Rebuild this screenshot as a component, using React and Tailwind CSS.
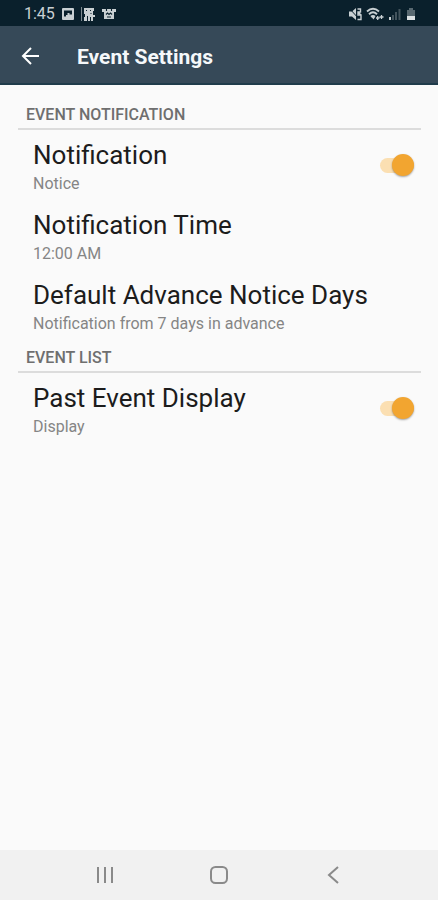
import { useState } from "react";

function StatusBar() {
  return (
    <div className="flex h-[26px] shrink-0 items-center justify-between bg-[#0a202c] pt-px pr-[22px] pl-6 text-[#c9d0d3]">
      <div className="flex items-center gap-[6px]">
        <span className="text-base leading-5">1:45</span>
        <svg className="h-3.5 w-3.5" viewBox="0 0 14 14" aria-hidden="true">
          <rect x="1" y="1" width="12" height="12" rx="1" fill="currentColor" />
          <path d="M3 3.500h8v4H8.500V6H6.500v2H5v1.500H3z" fill="#0a202c" />
        </svg>
        <svg className="h-4 w-3.5" viewBox="0 0 14 16" aria-hidden="true">
          <path d="M0.5 1v14" stroke="#7c898f" strokeWidth="1" />
          <path d="M3 2h10v3h-1v4h2v2h-2v4h-2v-4H9v4H7v-5H6v5H3v-4h1V8H3z" fill="currentColor" />
          <path d="M5 4.500h1M9 4.500h1M9.500 7.500h1" stroke="#0a202c" strokeWidth="1" />
        </svg>
        <svg className="h-3.5 w-4" viewBox="0 0 16 14" aria-hidden="true">
          <path d="M1 2h14v3h-2v7H3V5H1z" fill="currentColor" />
          <path d="M5.500 1v3M10.500 1v3M5 7.500l1.500-1.500L8 7.500 9.500 6 11 7.500M6 10h4" fill="none" stroke="#0a202c" strokeWidth="1.100" />
        </svg>
      </div>
      <div className="flex items-center gap-1">
        <svg className="h-3.5 w-3.5" viewBox="0 0 14 14" aria-hidden="true">
          <path d="M1 4.500h3l4-3.500v12L4 9.500H1z" fill="currentColor" />
          <path d="M1 1l11 12" stroke="#0a202c" strokeWidth="1" />
          <path d="M9.500 2h3v3h-2.500v3h3v4.500h-3.500M10 5l3 3" fill="none" stroke="currentColor" strokeWidth="1.400" />
        </svg>
        <svg className="h-3.5 w-[18px]" viewBox="0 0 18 14" aria-hidden="true">
          <path d="M1 4.500Q7-1 13 4.500M3 7.200Q7 3.500 11 7.200M5 9.800Q7 8 9 9.800" fill="none" stroke="currentColor" strokeWidth="1.900" />
          <path d="M5.500 10L7.500 12.500 9 10z" fill="currentColor" />
          <path d="M10 11h3.500M11.700 9v4M13.500 10h4M15.500 8v4" stroke="currentColor" strokeWidth="1.300" />
        </svg>
        <svg className="h-3.5 w-3.5" viewBox="0 0 14 14" aria-hidden="true">
          <path d="M1 10h2v3H1z" fill="currentColor" />
          <path d="M4 8h2v5H4zM7 5h2v8H7zM10.500 2h2v11h-2z" fill="#43545d" />
        </svg>
        <svg className="h-3.5 w-2.5" viewBox="0 0 10 14" aria-hidden="true">
          <path d="M3 1h4v2h2v6H1V3h2z" fill="#596971" />
          <path d="M1 9h8v4H1z" fill="#dde2e4" />
        </svg>
      </div>
    </div>
  );
}

function AppBar() {
  return (
    <header className="flex h-[59px] shrink-0 items-center border-b-2 border-[#203c4b] bg-[#364958] pt-1 pl-[19px]">
      <button type="button" aria-label="Back" className="text-white">
        <svg className="h-6 w-6" viewBox="0 0 24 24" fill="none" stroke="currentColor" strokeWidth="2" aria-hidden="true">
          <path d="M20 11H4.500M12 3l-8 8 8 8" />
        </svg>
      </button>
      <h1 className="ml-[34px] text-[21px] leading-7 font-bold text-[#f5f8fa]">Event Settings</h1>
    </header>
  );
}

function Section({ title, children }) {
  return (
    <section>
      <h2 className="mr-[17px] ml-[18px] flex h-[33px] items-center border-b-2 border-[#dcdcdc] pt-[5px] pl-2 text-base leading-5 font-medium text-[#6f6f6f]">
        {title}
      </h2>
      {children}
    </section>
  );
}

function RowText({ title, summary }) {
  return (
    <span className="flex flex-col gap-1 pt-1">
      <span className="text-[26px] leading-[30px] text-[#1c1c1c]">{title}</span>
      <span className="text-base leading-5 text-[#858585]">{summary}</span>
    </span>
  );
}

function LinkRow({ title, summary }) {
  return (
    <button type="button" className="flex h-[70px] w-full items-center pl-[33px] text-left">
      <RowText title={title} summary={summary} />
    </button>
  );
}

function SwitchRow({ title, on, off }) {
  const [checked, setChecked] = useState(true);
  return (
    <label className="flex h-[70px] cursor-pointer items-center justify-between pr-6 pl-[33px]">
      <RowText title={title} summary={checked ? on : off} />
      <input
        type="checkbox"
        role="switch"
        checked={checked}
        onChange={(e) => setChecked(e.target.checked)}
        className="flex h-[15px] w-[34px] shrink-0 appearance-none items-center rounded-full bg-[#d5d5d5] before:h-[22px] before:w-[22px] before:shrink-0 before:rounded-full before:bg-[#f1f1f1] before:shadow-[0_1px_2px_rgba(0,0,0,0.35)] before:content-[''] checked:justify-end checked:bg-[#fbdfb2] checked:before:bg-[#f2a530]"
      />
    </label>
  );
}

function NavBar() {
  return (
    <nav className="flex h-[50px] shrink-0 items-center justify-center gap-[90px] bg-[#f1f1f1] text-[#8a8a8a]">
      <button type="button" aria-label="Recent apps">
        <svg className="h-6 w-6" viewBox="0 0 24 24" stroke="currentColor" strokeWidth="2" aria-hidden="true">
          <path d="M5 4v16M12 4v16M19 4v16" />
        </svg>
      </button>
      <button type="button" aria-label="Home">
        <svg className="h-6 w-6" viewBox="0 0 24 24" fill="none" stroke="currentColor" strokeWidth="2" aria-hidden="true">
          <rect x="4" y="4" width="16" height="16" rx="4.500" />
        </svg>
      </button>
      <button type="button" aria-label="Back">
        <svg className="h-6 w-6" viewBox="0 0 24 24" fill="none" stroke="currentColor" strokeWidth="2" aria-hidden="true">
          <path d="M17 4l-9 8 9 8" />
        </svg>
      </button>
    </nav>
  );
}

export default function App() {
  return (
    <div className="flex min-h-screen flex-col bg-[#fafafa] font-['Roboto',sans-serif]">
      <StatusBar />
      <AppBar />
      <main className="flex-1 pt-3">
        <Section title="EVENT NOTIFICATION">
          <SwitchRow title="Notification" on="Notice" off="No notice" />
          <LinkRow title="Notification Time" summary="12:00 AM" />
          <LinkRow title="Default Advance Notice Days" summary="Notification from 7 days in advance" />
        </Section>
        <Section title="EVENT LIST">
          <SwitchRow title="Past Event Display" on="Display" off="Hide" />
        </Section>
      </main>
      <NavBar />
    </div>
  );
}
